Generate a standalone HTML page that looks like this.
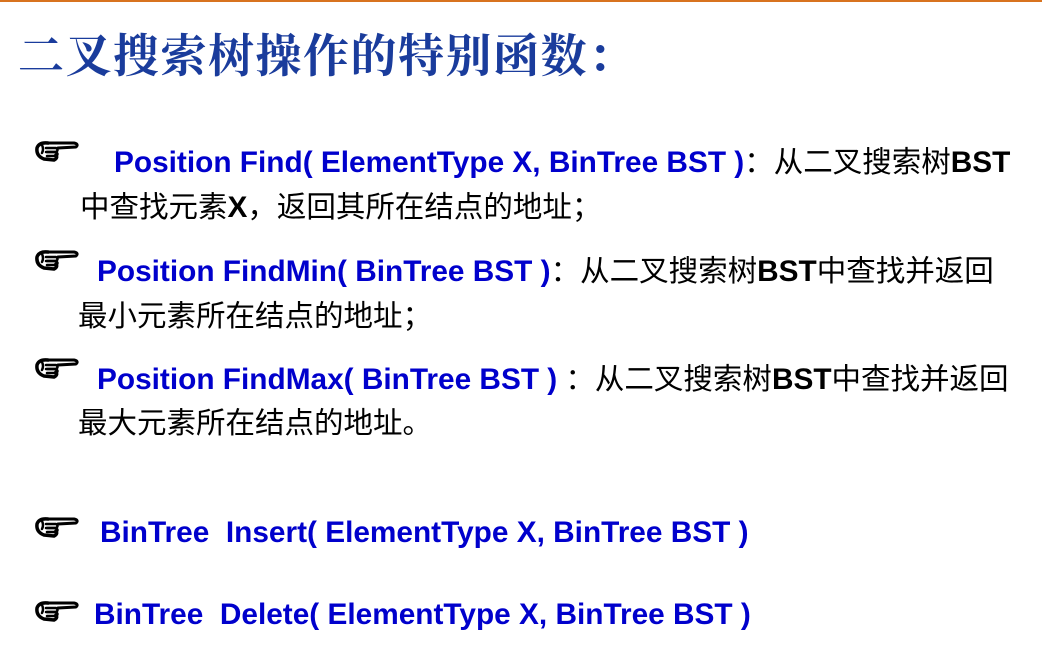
<!DOCTYPE html>
<html><head><meta charset="utf-8"><style>
html,body{margin:0;padding:0;background:#fff;}
body{width:1042px;height:659px;position:relative;overflow:hidden;}
.top{position:absolute;left:0;top:0;width:1042px;height:2px;background:#d8731f;}
.title{position:absolute;left:18px;top:20px;font-family:"Noto Serif CJK SC",serif;font-weight:bold;font-size:46px;color:#1a3c9c;letter-spacing:1.5px;white-space:nowrap;line-height:66px;}
.l{position:absolute;white-space:nowrap;font-family:"Liberation Sans","Noto Sans CJK SC",sans-serif;font-size:29.5px;line-height:34px;color:#000;}
.b{color:#0000cc;font-weight:bold;font-size:29.8px;}
.k{font-weight:bold;font-size:29.8px;}
.h{position:absolute;width:46px;height:24px;}
</style></head><body>
<div class="top"></div>
<div class="title">二叉搜索树操作的特别函数：</div>

<svg width="0" height="0" style="position:absolute"><defs>
<g id="hand" fill="none" stroke="#000" stroke-linecap="round" stroke-linejoin="round">
<path d="M14 4 L40 4 Q45 5 42 8 L24 9" stroke-width="3"/>
<path d="M14 4 Q5 3 3 9 Q2 17 10 20 L20 21 Q24 19 22 16" stroke-width="3.5"/>
<path d="M12 9 L22 9 Q25 11 22 13 L12 13" stroke-width="2.5"/>
<path d="M13 13 L22 13 Q25 15 22 17 L13 17" stroke-width="2.5"/>
<path d="M8 6 Q10 10 8 14" stroke-width="2.5"/>
</g></defs></svg>

<svg class="h" style="left:34px;top:139px" viewBox="0 0 46 24"><use href="#hand"/></svg>
<div class="l" style="left:114px;top:146px"><span class="b">Position Find( ElementType X, BinTree BST )</span>：从二叉搜索树<span class="k">BST</span></div>
<div class="l" style="left:80px;top:191px">中查找元素<span class="k">X</span>，返回其所在结点的地址；</div>

<svg class="h" style="left:34px;top:248px" viewBox="0 0 46 24"><use href="#hand"/></svg>
<div class="l" style="left:97px;top:255px"><span class="b">Position FindMin( BinTree BST )</span>：从二叉搜索树<span class="k">BST</span>中查找并返回</div>
<div class="l" style="left:78px;top:300px">最小元素所在结点的地址；</div>

<svg class="h" style="left:34px;top:356px" viewBox="0 0 46 24"><use href="#hand"/></svg>
<div class="l" style="left:97px;top:363px"><span class="b">Position FindMax( BinTree BST )</span> ：从二叉搜索树<span class="k">BST</span>中查找并返回</div>
<div class="l" style="left:78px;top:407px">最大元素所在结点的地址。</div>

<svg class="h" style="left:34px;top:515px" viewBox="0 0 46 24"><use href="#hand"/></svg>
<div class="l" style="left:100px;top:516px"><span class="b">BinTree&nbsp; Insert( ElementType X, BinTree BST )</span></div>

<svg class="h" style="left:34px;top:599px" viewBox="0 0 46 24"><use href="#hand"/></svg>
<div class="l" style="left:94px;top:598px"><span class="b">BinTree&nbsp; Delete( ElementType X, BinTree BST )</span></div>
</body></html>
